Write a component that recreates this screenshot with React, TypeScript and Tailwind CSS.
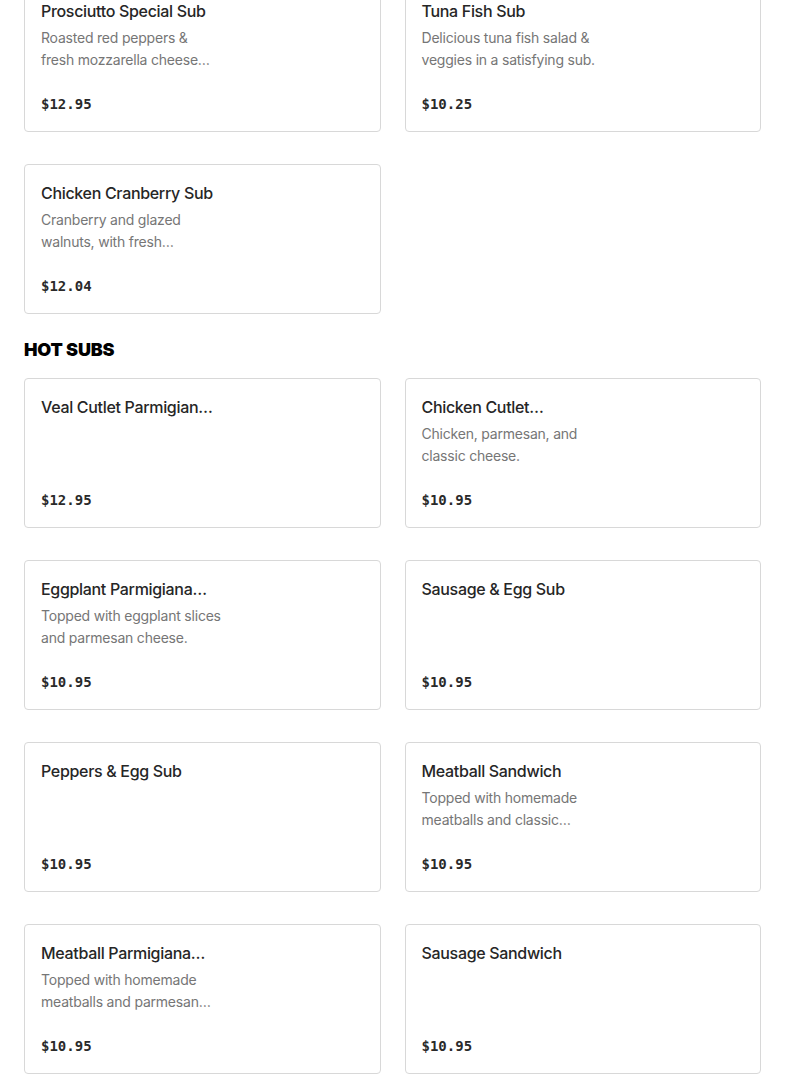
import React from "react";

type Item = { name: string; desc?: string[]; price: string };

const coldSubs: Item[] = [
  { name: "Prosciutto Special Sub", desc: ["Roasted red peppers &", "fresh mozzarella cheese…"], price: "$12.95" },
  { name: "Tuna Fish Sub", desc: ["Delicious tuna fish salad &", "veggies in a satisfying sub."], price: "$10.25" },
  { name: "Chicken Cranberry Sub", desc: ["Cranberry and glazed", "walnuts, with fresh…"], price: "$12.04" },
];

const hotSubs: Item[] = [
  { name: "Veal Cutlet Parmigian…", price: "$12.95" },
  { name: "Chicken Cutlet…", desc: ["Chicken, parmesan, and", "classic cheese."], price: "$10.95" },
  { name: "Eggplant Parmigiana…", desc: ["Topped with eggplant slices", "and parmesan cheese."], price: "$10.95" },
  { name: "Sausage & Egg Sub", price: "$10.95" },
  { name: "Peppers & Egg Sub", price: "$10.95" },
  { name: "Meatball Sandwich", desc: ["Topped with homemade", "meatballs and classic…"], price: "$10.95" },
  { name: "Meatball Parmigiana…", desc: ["Topped with homemade", "meatballs and parmesan…"], price: "$10.95" },
  { name: "Sausage Sandwich", price: "$10.95" },
];

function Card({ item }: { item: Item }) {
  return (
    <div className="h-[150px] rounded-[4px] border border-[#d8d8d8] bg-white p-4 flex flex-col justify-between">
      <div>
        <h3 className="text-[16px] leading-6 font-medium text-[#262626] tracking-[-0.02em]">{item.name}</h3>
        {item.desc && (
          <p className="mt-1 text-[14px] leading-[22px] text-[#767676] tracking-[-0.015em]">
            {item.desc.map((line) => (
              <span key={line} className="block whitespace-nowrap">
                {line}
              </span>
            ))}
          </p>
        )}
      </div>
      <div className="mb-px font-['DejaVu_Sans_Mono',monospace] text-[14px] leading-5 font-semibold text-[#2a2a2a]">
        {item.price}
      </div>
    </div>
  );
}

export default function App() {
  return (
    <div className="min-h-screen bg-white font-['Inter',sans-serif] px-6 overflow-hidden">
      <div className="-mt-[18px] grid grid-cols-2 gap-x-6 gap-y-8">
        {coldSubs.map((it) => (
          <Card key={it.name} item={it} />
        ))}
      </div>
      <h2 className="mt-6 mb-4 text-[18px] leading-6 font-black text-black tracking-[-0.01em]">HOT SUBS</h2>
      <div className="grid grid-cols-2 gap-x-6 gap-y-8 pb-8">
        {hotSubs.map((it) => (
          <Card key={it.name} item={it} />
        ))}
      </div>
    </div>
  );
}
